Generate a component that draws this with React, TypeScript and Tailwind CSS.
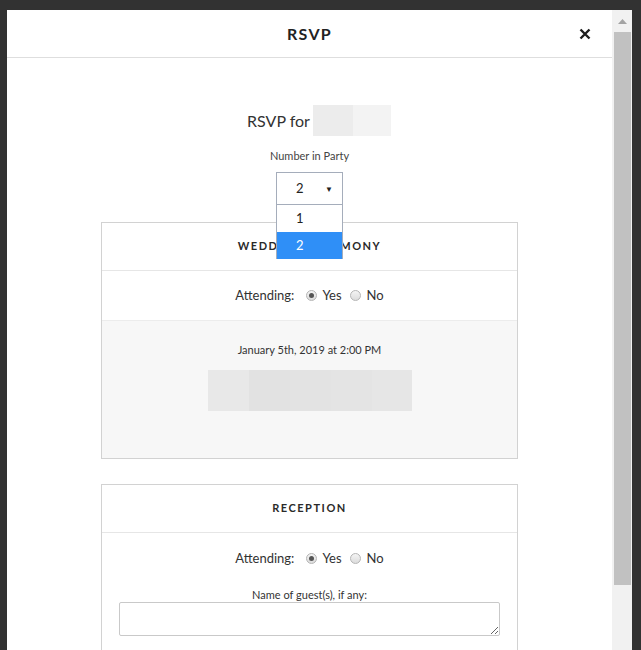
import React from "react";

const font = { fontFamily: "Lato, 'Open Sans', sans-serif" };

const Radio = ({ checked }: { checked?: boolean }) => (
  <span className="inline-flex h-[11px] w-[11px] items-center justify-center rounded-full border border-[#b5b5b5] bg-gradient-to-b from-[#f4f4f4] to-[#dcdcdc]">
    {checked && <span className="h-[5px] w-[5px] rounded-full bg-[#555]" />}
  </span>
);

const Attending = () => (
  <div className="flex items-center justify-center text-[13px] text-[#333]">
    <span className="mr-[12px]">Attending:</span>
    <Radio checked />
    <span className="ml-[5px] mr-[8px]">Yes</span>
    <Radio />
    <span className="ml-[6px]">No</span>
  </div>
);

const CardHeader = ({ title }: { title: string }) => (
  <div className="flex h-[48px] items-center justify-center border-b border-[#e6e6e6] text-[11px] font-bold tracking-[0.14em] text-[#2a2a2a]">
    {title}
  </div>
);

export default function App() {
  return (
    <div
      className="h-[650px] w-[641px] overflow-hidden bg-[#323232] pl-[7px] pt-[10px]"
      style={font}
    >
      <div className="flex h-[640px] w-[625px] bg-white">
        {/* modal content */}
        <div className="w-[605px] overflow-hidden">
          <div className="relative flex h-[48px] items-center justify-center border-b border-[#dedede]">
            <span className="text-[16px] font-bold tracking-[0.08em] text-[#222]">RSVP</span>
            <svg
              className="absolute right-[21px] top-[18px]"
              width="12"
              height="12"
              viewBox="0 0 12 12"
            >
              <path d="M1.5 1.5 L10.5 10.5 M10.5 1.5 L1.5 10.5" stroke="#1e1e1e" strokeWidth="2.4" />
            </svg>
          </div>

          <div className="flex flex-col items-center">
            <div className="mt-[47px] flex h-[31px] items-center pl-[19px]">
              <span className="mr-[3px] text-[16px] text-[#333]">RSVP for</span>
              <span className="h-[31px] w-[40px] bg-[#ececec]" />
              <span className="h-[31px] w-[38px] bg-[#f3f3f3]" />
            </div>

            <div className="mt-[12px] text-[11px] leading-[16px] text-[#444]">Number in Party</div>

            <div className="relative mt-[8px]">
              <div className="flex h-[33px] w-[67px] items-center border border-[#a5adbb] bg-white text-[13px] text-[#222]">
                <span className="ml-[19px]">2</span>
                <span className="ml-auto mr-[9px] text-[8px]">▼</span>
              </div>
              <div className="absolute left-0 top-[33px] z-10 w-[67px] border-x border-[#a5adbb] bg-white text-[13px]">
                <div className="flex h-[27px] items-center pl-[19px] text-[#222]">1</div>
                <div className="flex h-[27px] items-center bg-[#2f8ff7] pl-[19px] text-white">2</div>
              </div>
            </div>

            {/* ceremony */}
            <div className="mt-[17px] w-[417px] border border-[#d2d2d2]">
              <CardHeader title="WEDDING CEREMONY" />
              <div className="flex h-[50px] items-center justify-center border-b border-[#ececec]">
                <Attending />
              </div>
              <div className="flex flex-col items-center bg-[#f7f7f7] pb-[47px] pt-[21px]">
                <div className="text-[11px] leading-[16px] text-[#333]">January 5th, 2019 at 2:00 PM</div>
                <div className="mt-[12px] flex h-[41px] w-[204px]">
                  <span className="w-[41px] bg-[#e8e8e8]" />
                  <span className="w-[41px] bg-[#e2e2e2]" />
                  <span className="w-[41px] bg-[#e3e3e3]" />
                  <span className="w-[41px] bg-[#e4e4e4]" />
                  <span className="w-[40px] bg-[#e6e6e6]" />
                </div>
              </div>
            </div>

            {/* reception */}
            <div className="mt-[25px] w-[417px] border border-[#d2d2d2] px-[17px] pb-[20px]">
              <div className="-mx-[17px]">
                <CardHeader title="RECEPTION" />
              </div>
              <div className="pt-[16px]">
                <Attending />
              </div>
              <div className="mt-[19px] text-center text-[11px] leading-[14px] text-[#333]">
                Name of guest(s), if any:
              </div>
              <textarea className="block h-[34px] w-full rounded-[2px] border border-[#c9c9c9] bg-white" />
            </div>
          </div>
        </div>

        {/* scrollbar */}
        <div className="flex w-[20px] flex-col items-center bg-[#f1f1f1]">
          <div className="flex h-[22px] items-center justify-center">
            <svg width="9" height="5" viewBox="0 0 9 5">
              <path d="M0 5 L4.5 0 L9 5 Z" fill="#a3a3a3" />
            </svg>
          </div>
          <div className="h-[553px] w-[17px] bg-[#c1c1c1]" />
        </div>
      </div>
    </div>
  );
}
